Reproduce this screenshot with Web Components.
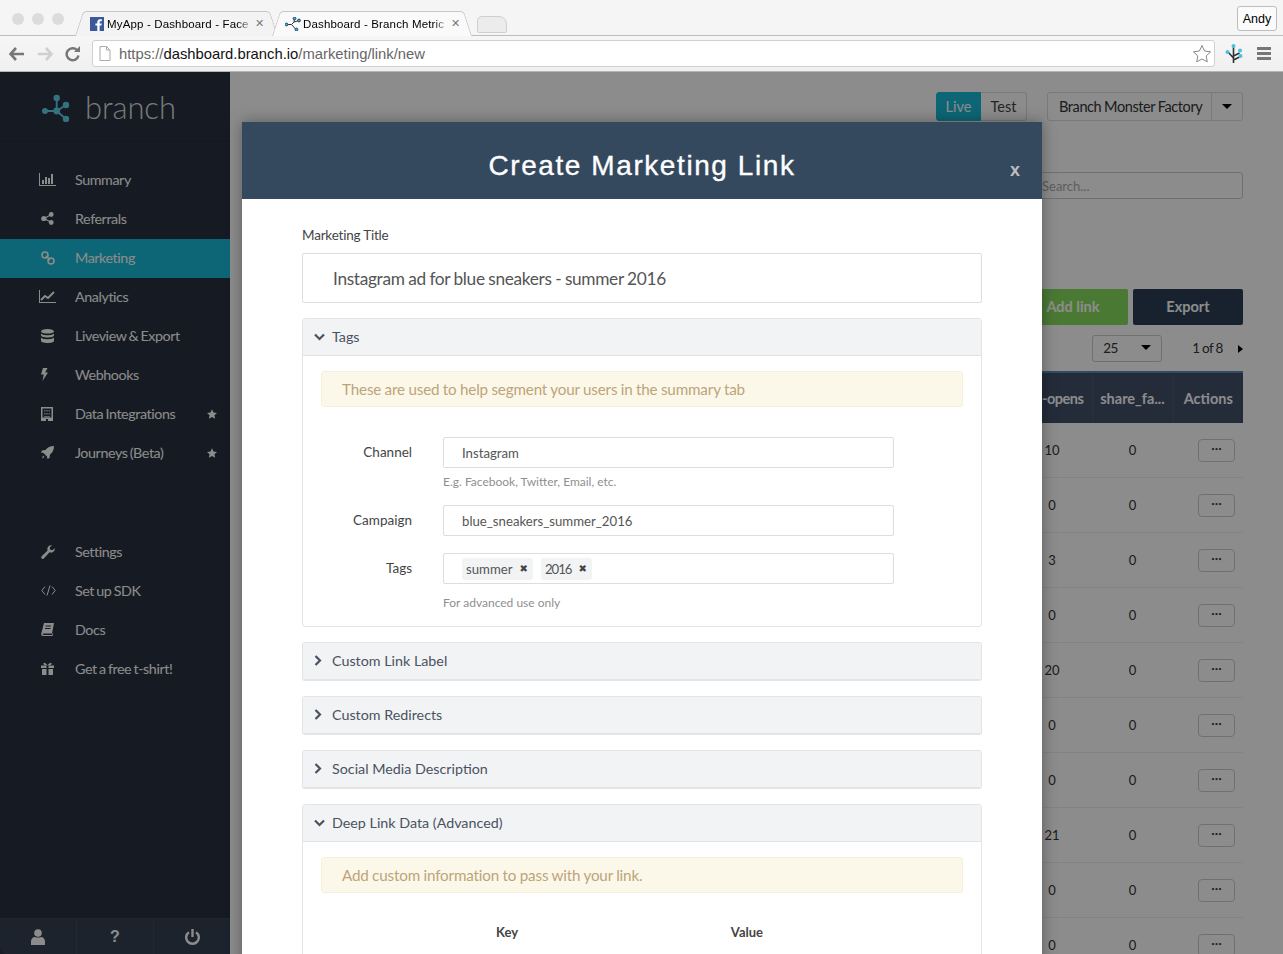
<!DOCTYPE html>
<html><head><meta charset="utf-8">
<style>
html,body{margin:0;padding:0;height:954px;overflow:hidden;background:#fff;}
body{font-family:"Lato","Open Sans",sans-serif;}
app-shell{display:block;}
</style></head>
<body>
<app-shell></app-shell>
<template id="t-chrome">
<style>
:host{display:block;height:72px;font-family:"Liberation Sans",sans-serif;color:#000;box-sizing:border-box;}
.tabs{height:35px;background:#f5f5f5;border-bottom:1px solid #bcbcbc;display:flex;align-items:flex-end;box-sizing:content-box;position:relative;padding-left:12px;}
.dots{display:flex;gap:8px;align-self:flex-start;margin-top:13px;margin-right:15px;}
.dots i{width:12px;height:12px;border-radius:50%;background:#dcdcdc;display:block;}
.tab{height:25px;position:relative;isolation:isolate;display:flex;align-items:center;font-size:11.5px;letter-spacing:.15px;box-sizing:border-box;margin-bottom:-1px;--bg:#f3f3f3;}
.tab::before,.tab::after{content:"";position:absolute;top:0;bottom:0;background:var(--bg);border-top:1px solid #c6c6c6;z-index:-1;box-sizing:border-box;}
.tab::before{left:0;right:40%;transform:skewX(-18deg);border-left:1px solid #c6c6c6;border-radius:4px 0 0 0;}
.tab::after{left:40%;right:0;transform:skewX(18deg);border-right:1px solid #c6c6c6;border-radius:0 4px 0 0;}
.tab.a{width:195px;padding:0 6px 0 11px;}
.tab.on{--bg:#fafafa;width:192px;padding:0 4px 0 9px;margin-left:2px;margin-right:9px;}
.tab .t{flex:1;white-space:nowrap;min-width:0;margin-left:3px;-webkit-mask-image:linear-gradient(90deg,#000 90%,rgba(0,0,0,.15));mask-image:linear-gradient(90deg,#000 90%,rgba(0,0,0,.15));}
.tab.on .t{margin-left:2px;}
.tab .x{width:16px;font-size:11px;color:#777;text-align:center;flex:none;}
.ghost{width:28px;height:15px;margin-bottom:2px;background:#ececec;border:1px solid #cfcfcf;border-radius:5px 8px 2px 2px;}
.user{position:absolute;right:6px;top:6px;width:40px;height:25px;box-sizing:border-box;background:#fbfbfb;border:1px solid #bdbdbd;border-radius:3px;font-size:12.5px;display:flex;align-items:center;justify-content:center;}
.bar{height:36px;background:linear-gradient(#f6f6f6,#f0f0f0);border-bottom:1px solid #b5b5b5;box-sizing:border-box;display:flex;align-items:center;padding-left:9px;}
.nav{display:flex;gap:12px;width:83px;align-items:center;flex:none;}
.url{width:1123px;height:27px;box-sizing:border-box;background:#fff;border:1px solid #d0d0d0;border-radius:3px;display:flex;align-items:center;padding-left:6px;font-size:14.8px;color:#666;flex:none;}
.url b{font-weight:400;color:#111;}
.url span{margin-left:8px;white-space:nowrap;}
.url .st{margin-left:auto;margin-right:2px;}
.rt{display:flex;align-items:center;margin-left:10px;gap:14px;}
</style>
<div class="tabs">
 <div class="dots"><i></i><i></i><i></i></div>
 <div class="tab a"><svg width="14" height="14" viewBox="0 0 14 14" style="flex:none"><rect width="14" height="14" fill="#3b5998"/><path d="M9.6 14V8.6h1.8l.3-2.1H9.6V5.2c0-.6.2-1 1-1h1.2V2.300c-.2 0-.9-.1-1.700-.1-1.700 0-2.800 1-2.800 2.900v1.400H5.400v2.100h1.900V14z" fill="#fff"/></svg><span class="t">MyApp - Dashboard - Face</span><span class="x">✕</span></div>
 <div class="tab on"><svg width="16" height="14" viewBox="0 0 16 14" fill="none" stroke="#333" stroke-width="1" style="flex:none"><path d="M1.500 7.500H6.500L9 5 9.500 1.500M9 5 14 3.500M6.500 7.500 11 12.500"/><g fill="#45b8d8" stroke="#246"><circle cx="1.500" cy="7.500" r="1.400"/><circle cx="9.500" cy="1.500" r="1.400"/><circle cx="14" cy="3.500" r="1.400"/><circle cx="11.500" cy="12.500" r="1.400"/></g></svg><span class="t">Dashboard - Branch Metric</span><span class="x">✕</span></div>
 <div class="ghost"></div>
 <div class="user">Andy</div>
</div>
<div class="bar">
 <div class="nav">
  <svg width="16" height="14" viewBox="0 0 16 14"><path d="M7 1 1.500 7 7 13M2 7h13" fill="none" stroke="#777" stroke-width="2.600"/></svg>
  <svg width="16" height="14" viewBox="0 0 16 14"><path d="M9 1l5.500 6L9 13M14 7H1" fill="none" stroke="#cfcfcf" stroke-width="2.600"/></svg>
  <svg width="16" height="16" viewBox="0 0 16 16"><path d="M13.500 9.500A6 6 0 1 1 12 4" fill="none" stroke="#777" stroke-width="2.500"/><path d="M9 6h6V0z" fill="#777"/></svg>
 </div>
 <div class="url">
  <svg width="12" height="15" viewBox="0 0 12 15"><path d="M1 .5h6.500L11 4v10.500H1zM7.500.5V4H11" fill="#fff" stroke="#aaa"/></svg>
  <span>https://<b>dashboard.branch.io</b>/marketing/link/new</span>
  <svg class="st" width="20" height="19" viewBox="0 0 20 19"><path d="M10 1.500l2.600 5.500 6 .8-4.400 4.100 1.100 5.900L10 15l-5.300 2.800 1.100-5.900L1.400 7.800l6-.8z" fill="#fff" stroke="#888"/></svg>
 </div>
 <div class="rt">
  <svg width="18" height="20" viewBox="0 0 18 20" fill="none" stroke="#333" stroke-width="1.600"><path d="M8.500 19V2M8.500 14 3 8M8.500 12l6-3M8.500 16l6-3"/><g fill="#4cc1e4" stroke="none"><circle cx="8.500" cy="2" r="2"/><circle cx="2.500" cy="8" r="2"/><circle cx="15" cy="6.500" r="2"/><circle cx="15.500" cy="12" r="2"/></g></svg>
  <svg width="15" height="13" viewBox="0 0 15 13" fill="#777"><rect width="14" height="3"/><rect y="5" width="14" height="3"/><rect y="10" width="14" height="3"/></svg>
 </div>
</div>
</template>

<template id="t-side">
<style>
:host{display:flex;flex-direction:column;width:230px;height:882px;background:#283140;color:#fff;font-family:"Lato","Open Sans",sans-serif;flex:none;box-sizing:border-box;}
.logo{height:69px;display:flex;align-items:center;padding-left:41px;gap:14px;font-size:31px;letter-spacing:-.1px;color:#dedede;font-weight:300;border-bottom:1px solid #232b38;box-sizing:content-box;}
nav{padding-top:19px;}
.foot{margin-top:auto;height:35px;display:flex;background:#344050;border-top:1px solid #3a4656;border-radius:0 0 0 6px;}
.foot div{flex:1;display:flex;align-items:center;justify-content:center;border-right:1px solid #3f4b5c;}
.foot div:last-child{border:none;}
.sp{height:60px;}
</style>
<div class="logo"><svg width="30" height="30" viewBox="0 0 30 30" fill="none" stroke="#5fd0ec" stroke-width="1.800"><path d="M4 19H15.700M15.700 19V6M15.700 19 25 13M15.700 19 25 27"/><g fill="#5fd0ec" stroke="none"><circle cx="4" cy="19" r="3"/><circle cx="15.700" cy="19" r="3.400"/><circle cx="15.700" cy="6" r="3.200"/><circle cx="25" cy="13" r="3.200"/><circle cx="25" cy="27" r="3.200"/></g></svg><span>branch</span></div>
<nav>
<nav-item label="Summary" icon="bar"></nav-item>
<nav-item label="Referrals" icon="share"></nav-item>
<nav-item label="Marketing" icon="link" active></nav-item>
<nav-item label="Analytics" icon="line"></nav-item>
<nav-item label="Liveview &amp; Export" icon="db"></nav-item>
<nav-item label="Webhooks" icon="bolt"></nav-item>
<nav-item label="Data Integrations" icon="bld" star></nav-item>
<nav-item label="Journeys (Beta)" icon="rocket" star></nav-item>
<div class="sp"></div>
<nav-item label="Settings" icon="wrench"></nav-item>
<nav-item label="Set up SDK" icon="code"></nav-item>
<nav-item label="Docs" icon="book"></nav-item>
<nav-item label="Get a free t-shirt!" icon="gift"></nav-item>
</nav>
<div class="foot">
<div><svg width="14" height="16" viewBox="0 0 14 16" fill="#fff"><circle cx="7" cy="4" r="3.800"/><path d="M0 16v-3c0-3.500 2-5 4-5 1 .8 5 .8 6 0 2 0 4 1.500 4 5v3z"/></svg></div>
<div style="font:700 16px 'Liberation Sans',sans-serif;">?</div>
<div><svg width="15" height="16" viewBox="0 0 15 16" fill="none" stroke="#fff" stroke-width="2.400"><path d="M4 3.200a6.300 6.300 0 1 0 7 0M7.500 0v8"/></svg></div>
</div>
</template>

<template id="t-main">
<style>
:host{display:block;flex:1;height:882px;background:#fff;color:#444;font-family:"Lato","Open Sans",sans-serif;font-size:14px;box-sizing:border-box;padding:20px 40px 0 0;overflow:hidden;min-width:0;}
.top{display:flex;justify-content:flex-end;height:30px;}
.seg{display:flex;margin-right:20px;font-size:14.500px;}
.seg span{display:flex;align-items:center;justify-content:center;height:29px;box-sizing:border-box;border:1px solid #ddd;}
.seg .live{width:45px;background:#18bbd5;color:#fff;border-color:#18bbd5;border-radius:3px 0 0 3px;}
.seg .test{width:46px;border-radius:0 3px 3px 0;border-left:none;}
.drop{width:196px;height:29px;box-sizing:border-box;border:1px solid #ddd;border-radius:3px;display:flex;font-size:14.500px;color:#333;}
.drop span{flex:1;display:flex;align-items:center;padding-left:11px;border-right:1px solid #ddd;white-space:pre;word-spacing:-.5px;letter-spacing:-.4px;}
.drop i{width:30px;display:flex;align-items:center;justify-content:center;}
.tri{width:0;height:0;border-left:5px solid transparent;border-right:5px solid transparent;border-top:5px solid #000;display:block;}
.search{margin:50px 0 0 auto;width:320px;height:27px;box-sizing:border-box;border:1px solid #ccc;border-radius:3px;font-size:13px;color:#aaa;display:flex;align-items:center;padding-left:118px;}
.acts{display:flex;justify-content:flex-end;gap:5px;margin-top:90px;}
.acts div{height:36px;display:flex;align-items:center;justify-content:center;font-weight:700;font-size:14.500px;color:#fff;border-radius:2px;box-sizing:border-box;padding-bottom:2px;}
.add{width:134px;background:#88dd60;padding-left:24px;}
.exp{width:110px;background:#2a3f55;}
.pg{display:flex;justify-content:flex-end;align-items:center;margin-top:10px;height:27px;font-size:13.500px;color:#333;word-spacing:-.8px;letter-spacing:-.35px;}
.sel{width:70px;height:27px;box-sizing:border-box;border:1px solid #ccc;border-radius:3px;display:flex;align-items:center;justify-content:space-between;padding:0 10px 2px;margin-right:30px;}
.pg>span{margin-bottom:2px;}
.next{width:0;height:0;border-top:4px solid transparent;border-bottom:4px solid transparent;border-left:5px solid #000;margin:0 0 0 15px;}
table{width:100%;border-collapse:collapse;table-layout:fixed;margin-top:9px;}
th{height:50px;background:#42506a;color:#fff;font-weight:700;font-size:14.500px;border-top:2px solid #5c88bb;border-right:1px solid #4c5a74;padding:0;white-space:nowrap;}
th:last-child{border-right:none;}
td{height:54px;padding:0;border-bottom:1px solid #eee;text-align:center;font-size:13px;color:#333;}
td:first-child{padding-right:30px;}
td:last-child{padding-left:17px;}
.b{display:inline-flex;width:37px;height:23px;box-sizing:border-box;border:1px solid #ccc;border-radius:4px;align-items:center;justify-content:center;font-size:6px;line-height:1;padding-bottom:2px;color:#444;}
</style>
<div class="top"><div class="seg"><span class="live">Live</span><span class="test">Test</span></div><div class="drop"><span>Branch Monster Factory</span><i><b class="tri"></b></i></div></div>
<div class="search">Search...</div>
<div class="acts"><div class="add">Add link</div><div class="exp">Export</div></div>
<div class="pg"><div class="sel">25<b class="tri"></b></div><span>1 of 8</span><b class="next"></b></div>
<div style="width:201px;margin-left:auto;margin-right:0">
<table id="tb"><colgroup><col style="width:50px"><col style="width:81px"><col style="width:70px"></colgroup>
<tr><th style="text-align:right;padding-right:9px;letter-spacing:-.5px">-opens</th><th>share_fa...</th><th>Actions</th></tr>
</table></div>
</template>

<template id="t-modal">
<style>
:host{display:block;width:800px;background:#fff;color:#444;font-family:"Lato","Open Sans",sans-serif;box-shadow:0 0 14px rgba(0,0,0,.35);}
header{height:77px;box-sizing:border-box;padding-top:10px;background:#34495e;color:#fff;display:flex;align-items:center;justify-content:center;position:relative;font:400 28px "Liberation Sans",sans-serif;letter-spacing:1.58px;-webkit-text-stroke:.35px #fff;}
header .c{position:absolute;right:22px;top:38px;font:700 18px "Liberation Sans",sans-serif;color:#bdbdbd;letter-spacing:0;-webkit-text-stroke:0;}
.body{padding:27px 60px 0;}
.lab{font-size:13.500px;color:#444;line-height:18px;margin-bottom:9px;letter-spacing:-.2px;}
.title{height:50px;box-sizing:border-box;border:1px solid #ddd;border-radius:2px;display:flex;align-items:center;padding-left:30px;font-size:17.300px;color:#555;margin-bottom:15px;word-spacing:-.5px;letter-spacing:-.33px;}
</style>
<header>Create Marketing Link<span class="c">x</span></header>
<div class="body">
<div class="lab">Marketing Title</div>
<div class="title">Instagram ad for blue sneakers - summer 2016</div>
<accordion-panel heading="Tags" open style="height:309px">
 <note-bar>These are used to help segment your users in the summary tab</note-bar>
 <form-row label="Channel" value="Instagram" hint="E.g. Facebook, Twitter, Email, etc." style="margin-top:30px;height:68px"></form-row>
 <form-row label="Campaign" value="blue_sneakers_summer_2016" style="height:48px"></form-row>
 <form-row label="Tags" tags hint="For advanced use only"></form-row>
</accordion-panel>
<accordion-panel heading="Custom Link Label"></accordion-panel>
<accordion-panel heading="Custom Redirects"></accordion-panel>
<accordion-panel heading="Social Media Description"></accordion-panel>
<accordion-panel heading="Deep Link Data (Advanced)" open style="height:300px">
 <note-bar>Add custom information to pass with your link.</note-bar>
 <div style="display:flex;font-weight:700;font-size:13px;margin-top:31px;color:#444;"><span style="width:197px;text-align:right">Key</span><span style="width:245px;text-align:right">Value</span></div>
</accordion-panel>
</div>
</template>

<script>
const ICONS={
bar:'<svg width="17" height="13" viewBox="0 0 17 13" fill="currentColor"><path d="M0 0h1v12h16v1H0z"/><rect x="3" y="7" width="2" height="4"/><rect x="6" y="4" width="2" height="7"/><rect x="9" y="5" width="2" height="6"/><rect x="12" y="1" width="2" height="10"/></svg>',
share:'<svg width="13" height="13" viewBox="0 0 13 13" fill="currentColor"><circle cx="2.800" cy="6.500" r="2.600"/><circle cx="10.200" cy="2.500" r="2.400"/><circle cx="10.200" cy="10.500" r="2.400"/><path d="M3 6 10 2l.5 1-7 4zM3 7l7 4 .5-1-7-4z"/></svg>',
link:'<svg width="14" height="14" viewBox="0 0 14 14" fill="none" stroke="currentColor" stroke-width="1.500"><circle cx="4" cy="4" r="3"/><circle cx="10" cy="10" r="3"/><path d="M5 5l4 4"/></svg>',
line:'<svg width="17" height="13" viewBox="0 0 17 13"><path d="M0 0h1v12h16v1H0z" fill="currentColor"/><path d="M2 10l4-4 3 2 6-6" fill="none" stroke="currentColor" stroke-width="1.800"/></svg>',
db:'<svg width="13" height="14" viewBox="0 0 13 14" fill="currentColor"><ellipse cx="6.500" cy="2.300" rx="6.500" ry="2.300"/><path d="M0 4c0 1.300 3 2.300 6.500 2.300S13 5.300 13 4v2.300c0 1.300-3 2.300-6.500 2.300S0 7.600 0 6.300zM0 8c0 1.300 3 2.300 6.500 2.300S13 9.300 13 8v3.700C13 13 10 14 6.500 14S0 13 0 11.700z"/></svg>',
bolt:'<svg width="7" height="13" viewBox="0 0 7 13" fill="currentColor"><path d="M2 0h4.500L4.200 4.500H7L1.500 13l1.300-6.500H0z"/></svg>',
bld:'<svg width="12" height="14" viewBox="0 0 12 14"><path fill-rule="evenodd" fill="currentColor" d="M0 0h12v14H7v-2H5v2H0zM1.500 1.500v9h9v-9z"/><path fill="currentColor" opacity=".65" d="M3 3h1.500v1.500H3zm2.300 0h1.500v1.500H5.300zm2.300 0H9v1.500H7.600zM3 6h1.500v1.500H3zm2.300 0h1.500v1.500H5.300zm2.300 0H9v1.500H7.600zM3 9h6v1.500H3z"/></svg>',
rocket:'<svg width="13" height="13" viewBox="0 0 13 13" fill="currentColor"><path d="M13 0c0 4-1.500 6.500-4 8.500L8.500 12 6.500 13l-.5-2.500L2.500 7 0 6.500l1-2 3.500-.5C6.500 1.500 9 0 13 0zM2 9.500L3.500 11 1 12.500z"/></svg>',
wrench:'<svg width="14" height="14" viewBox="0 0 14 14" fill="currentColor"><path d="M13.800 3.200A3.900 3.900 0 0 1 8.600 7.300L3 13.300a1.500 1.500 0 0 1-2.300-2.100L6.600 5.500A3.900 3.900 0 0 1 11 .3L8.700 2.600l.6 2.100 2.100.6z"/></svg>',
code:'<svg width="15" height="11" viewBox="0 0 15 11" fill="none" stroke="currentColor" stroke-width="1"><path d="M4 1.500.8 5.500 4 9.500M11 1.500l3.200 4L11 9.500M9 .5 6 10.500"/></svg>',
book:'<svg width="13" height="13" viewBox="0 0 13 13" fill="currentColor"><path d="M3 0h10l-2 10.500H2.500c-1 0-1 1.500 0 1.500H11l.6-1.800.7.500L11.500 13H2c-1.500 0-2-1-1.700-2.500zM4.500 2.500v1H10v-1zM4 5v1h5.500V5z"/></svg>',
gift:'<svg width="13" height="13" viewBox="0 0 13 13" fill="currentColor"><path d="M0 3.500h5.500V6H0zM7.500 3.500H13V6H7.500zM1 7h4.500v6H1zM7.500 7H12v6H7.500z"/><path d="M6.500 3.500C5 1 3 0 2.500 1.200 2 2.500 4 3.500 6.500 3.500zm0 0C8 1 10 0 10.500 1.200 11 2.500 9 3.500 6.500 3.500z"/></svg>'
};
const STAR='<svg width="10" height="10" viewBox="0 0 20 19" fill="currentColor" style="display:block"><path d="M10 0l3 6.400 7 .9-5.100 4.800 1.300 6.900L10 15.600 3.800 19l1.300-6.900L0 7.300l7-.9z"/></svg>';
function tpl(id){return document.getElementById(id).content.cloneNode(true);}
customElements.define('browser-chrome',class extends HTMLElement{constructor(){super();this.attachShadow({mode:'open'}).appendChild(tpl('t-chrome'));}});
customElements.define('nav-item',class extends HTMLElement{connectedCallback(){if(this.shadowRoot)return;const a=this.hasAttribute('active'),s=this.hasAttribute('star');
this.attachShadow({mode:'open'}).innerHTML=`<style>:host{display:flex;align-items:center;height:39px;box-sizing:border-box;padding-bottom:2px;font-size:14.300px;letter-spacing:-.42px;word-spacing:-1px;color:#fff;${a?'background:#18bbd5;':''}}
.i{width:40px;margin-left:38px;margin-right:-3px;display:flex;justify-content:flex-start;}.i svg{display:block;margin-left:${this.getAttribute('icon')==='bar'||this.getAttribute('icon')==='line'?1:3}px}
.s{margin-left:auto;margin-right:13px;}</style><span class="i">${ICONS[this.getAttribute('icon')]}</span><span>${this.getAttribute('label').replace('&','&amp;')}</span>${s?'<span class="s">'+STAR+'</span>':''}`;}});
customElements.define('app-sidebar',class extends HTMLElement{constructor(){super();this.attachShadow({mode:'open'}).appendChild(tpl('t-side'));}});
customElements.define('dash-main',class extends HTMLElement{constructor(){super();const r=this.attachShadow({mode:'open'});r.appendChild(tpl('t-main'));
const t=r.getElementById('tb');['10','0','3','0','20','0','0','21','0','0'].forEach(v=>{const tr=document.createElement('tr');tr.innerHTML=`<td>${v}</td><td>0</td><td><span class="b">•••</span></td>`;t.appendChild(tr);});}});
customElements.define('note-bar',class extends HTMLElement{constructor(){super();this.attachShadow({mode:'open'}).innerHTML=`<style>:host{display:flex;align-items:center;height:36px;box-sizing:border-box;background:#fcf8e9;border:1px solid #f6efd9;border-radius:3px;padding-left:20px;color:#bda47a;font-size:15.200px;word-spacing:-.3px;letter-spacing:-.15px;}</style><slot></slot>`;}});
customElements.define('accordion-panel',class extends HTMLElement{connectedCallback(){if(this.shadowRoot)return;const o=this.hasAttribute('open');
this.attachShadow({mode:'open'}).innerHTML=`<style>:host{display:block;box-sizing:border-box;border:1px solid #e4e4e4;${o?'':'border-bottom-width:2px;'}border-radius:3px;margin-bottom:15px;overflow:hidden;}
.h{height:35px;padding-bottom:1px;background:#f2f3f5;${o?'border-bottom:1px solid #e2e2e2;':''}display:flex;align-items:center;font-size:14.300px;color:#4a5260;padding-left:11px;box-sizing:content-box;}
.h svg{margin-right:7px;}.c{padding:15px 18px 0;}</style>
<div class="h">${o?'<svg width="11" height="8" viewBox="0 0 11 8"><path d="M1 1.500l4.500 4.500L10 1.500" fill="none" stroke="#4a5260" stroke-width="2.200"/></svg>':'<svg width="8" height="11" viewBox="0 0 8 11" style="margin-right:10px"><path d="M1.500 1L6 5.500 1.500 10" fill="none" stroke="#4a5260" stroke-width="2.200"/></svg>'}<span>${this.getAttribute('heading')}</span></div>${o?'<div class="c"><slot></slot></div>':''}`;}});
customElements.define('form-row',class extends HTMLElement{connectedCallback(){if(this.shadowRoot)return;const h=this.getAttribute('hint'),v=this.getAttribute('value');
const inner=this.hasAttribute('tags')?'<span class="tag">summer<b>✖</b></span><span class="tag"><span style="letter-spacing:-1px">2016</span><b>✖</b></span>':v;
this.attachShadow({mode:'open'}).innerHTML=`<style>:host{display:flex;align-items:flex-start;color:#444;}
.l{width:91px;text-align:right;font-size:13.500px;padding-top:7px;color:#444;}
.f{margin-left:31px;width:451px}
.in{height:31px;box-sizing:border-box;border:1px solid #ddd;border-radius:2px;display:flex;align-items:center;padding-left:18px;font-size:13.200px;color:#555;gap:8px;}
.tag{background:#f2f3f5;border-radius:3px;height:22px;padding:0 5px 0 4px;display:flex;align-items:center;gap:7px;white-space:pre;}
.tag b{font-size:10px;font-family:"DejaVu Sans",sans-serif;color:#444;}
.hint{font-size:12px;color:#8f8f8f;margin-top:${this.hasAttribute('tags')?11:6}px;}</style>
<div class="l">${this.getAttribute('label')}</div><div class="f"><div class="in">${inner}</div>${h?`<div class="hint">${h}</div>`:''}</div>`;}});
customElements.define('link-modal',class extends HTMLElement{constructor(){super();this.attachShadow({mode:'open'}).appendChild(tpl('t-modal'));}});
customElements.define('app-shell',class extends HTMLElement{constructor(){super();this.attachShadow({mode:'open'}).innerHTML=`<style>:host{display:block;width:1283px;height:954px;overflow:hidden;position:relative;}
.row{display:flex;height:882px;}
.ov{position:absolute;left:0;right:0;top:72px;bottom:0;background:rgba(0,0,0,.45);}
link-modal{position:absolute;left:242px;top:122px;}</style>
<browser-chrome></browser-chrome><div class="row"><app-sidebar></app-sidebar><dash-main></dash-main></div><div class="ov"></div><link-modal></link-modal>`;}});
</script>
</body></html>
